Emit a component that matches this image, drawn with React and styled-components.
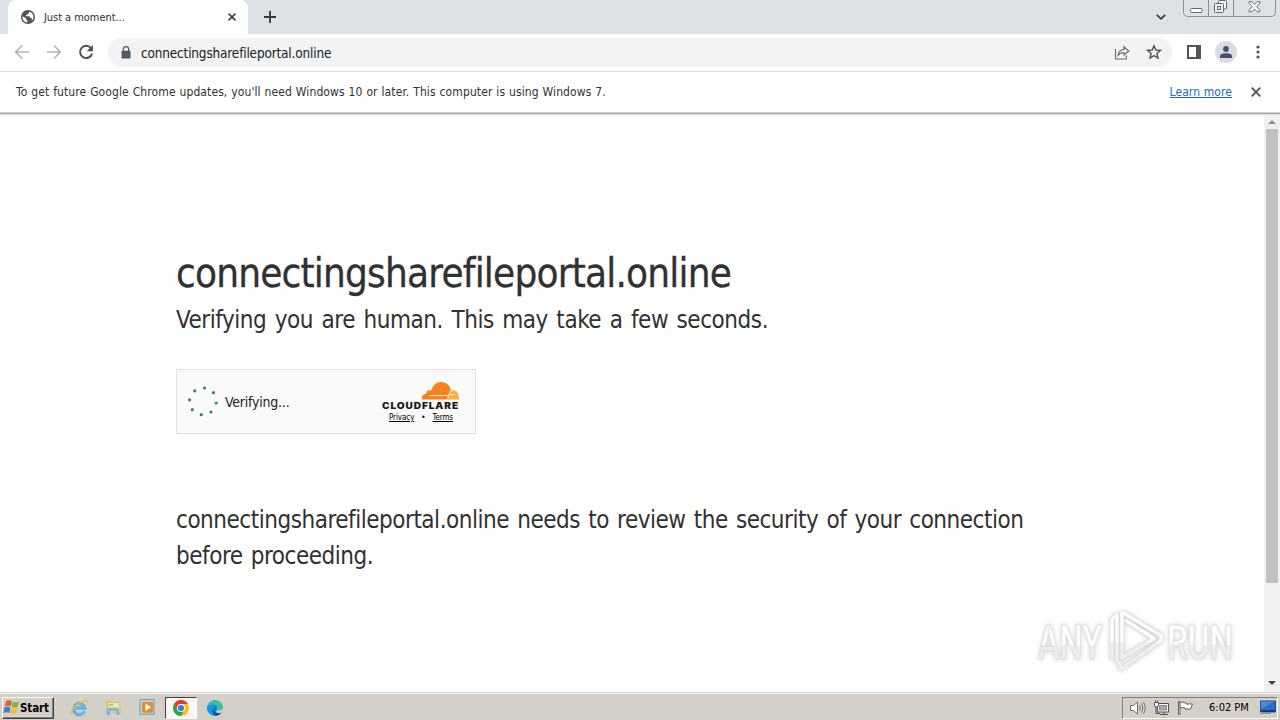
import styled, { createGlobalStyle } from "styled-components";

export default function App() {
    return (
        <Screen>
            <GlobalStyle />
            <TabStrip>
                <Tab>
                    <GlobeIcon />
                    <TabTitle>Just a moment...</TabTitle>
                    <CrossIcon size={8} stroke="#3c4043" />
                </Tab>
                <NewTab>
                    <svg width="12" height="12" viewBox="0 0 12 12">
                        <path d="M6 0v12M0 6h12" stroke="#35363a" strokeWidth="1.8" />
                    </svg>
                </NewTab>
                <TabSearch>
                    <svg width="10" height="6" viewBox="0 0 10 6">
                        <path d="M.8.8 5 4.8 9.2.8" fill="none" stroke="#35363a" strokeWidth="1.7" />
                    </svg>
                </TabSearch>
                <WindowButtons />
            </TabStrip>

            <Toolbar>
                <NavIcons>
                    <svg width="16" height="16" viewBox="0 0 16 16">
                        <path d="M15 8H2M8 1.5 1.7 8 8 14.5" fill="none" stroke="#b4b6b9" strokeWidth="1.7" />
                    </svg>
                    <svg width="16" height="16" viewBox="0 0 16 16">
                        <path d="M1 8h13M8 1.5 14.3 8 8 14.5" fill="none" stroke="#b4b6b9" strokeWidth="1.7" />
                    </svg>
                    <svg width="16" height="16" viewBox="0 0 16 16">
                        <path d="M13 4.2A6.1 6.1 0 1 0 14.1 9.5" fill="none" stroke="#505357" strokeWidth="2" />
                        <path d="M15 1v6.3H8.7z" fill="#505357" />
                    </svg>
                </NavIcons>
                <AddressBar>
                    <svg width="10" height="13" viewBox="0 0 10 13">
                        <path d="M2.3 6V3.4a2.7 2.7 0 0 1 5.4 0V6" fill="none" stroke="#55585c" strokeWidth="1.3" />
                        <rect x=".5" y="4.8" width="9" height="7.8" rx="1" fill="#55585c" />
                    </svg>
                    <Url>connectingsharefileportal.online</Url>
                    <ShareIcon />
                    <StarIcon />
                </AddressBar>
                <ToolbarActions>
                    <svg width="14" height="14" viewBox="0 0 14 14">
                        <path d="M1 1h12v12H1z" fill="none" stroke="#505357" strokeWidth="2" />
                        <path d="M9 1h4v12H9z" fill="#505357" />
                    </svg>
                    <Avatar>
                        <svg width="12" height="12" viewBox="0 0 12 12" fill="#46506a">
                            <circle cx="6" cy="3" r="2.9" />
                            <path d="M0 12V10.300Q0 7.200 6 7.200T12 10.300V12z" />
                        </svg>
                    </Avatar>
                    <svg width="4" height="14" viewBox="0 0 4 14" fill="#505357">
                        <circle cx="2" cy="2" r="1.6" />
                        <circle cx="2" cy="7" r="1.6" />
                        <circle cx="2" cy="12" r="1.6" />
                    </svg>
                </ToolbarActions>
            </Toolbar>

            <InfoBar>
                <InfoText>
                    To get future Google Chrome updates, you'll need Windows 10 or later. This computer is using Windows 7.
                </InfoText>
                <LearnMore>Learn more</LearnMore>
                <CrossIcon size={10} stroke="#505357" />
            </InfoBar>

            <Viewport>
                <Page>
                    <Title>connectingsharefileportal.online</Title>
                    <Subtitle>Verifying you are human. This may take a few seconds.</Subtitle>
                    <Challenge>
                        <Spinner />
                        <VerifyText>Verifying...</VerifyText>
                        <Brand>
                            <CloudflareLogo />
                            <BrandLinks>
                                <u>Privacy</u>
                                <span>•</span>
                                <u>Terms</u>
                            </BrandLinks>
                        </Brand>
                    </Challenge>
                    <Review>
                        <span>connectingsharefileportal.online needs to review the security of your connection</span>
                        <span>before proceeding.</span>
                    </Review>
                </Page>
                <Scrollbar>
                    <svg width="8" height="4" viewBox="0 0 8 4"><path d="M0 4 4 0l4 4z" fill="#8b8b8b" /></svg>
                    <Thumb />
                    <svg width="8" height="4" viewBox="0 0 8 4"><path d="M0 0h8L4 4z" fill="#404040" /></svg>
                </Scrollbar>
                <Watermark />
            </Viewport>

            <Taskbar>
                <StartButton>
                    <WindowsFlag />
                    <span>Start</span>
                </StartButton>
                <Launcher><ExplorerE /></Launcher>
                <Launcher><FolderIcon /></Launcher>
                <Launcher><MediaIcon /></Launcher>
                <Launcher $active><ChromeIcon /></Launcher>
                <Launcher><EdgeIcon /></Launcher>
                <Tray>
                    <SpeakerIcon />
                    <NetworkIcon />
                    <FlagIcon />
                    <Clock>6:02 PM</Clock>
                    <DesktopIcon />
                </Tray>
            </Taskbar>
        </Screen>
    );
}

function CrossIcon({ size, stroke }) {
    return (
        <svg width={size} height={size} viewBox="0 0 10 10">
            <path d="M.7.700 9.300 9.300M9.300.700.700 9.300" stroke={stroke} strokeWidth={size > 8 ? 1.8 : 2} />
        </svg>
    );
}

function GlobeIcon() {
    return (
        <svg width="14" height="14" viewBox="0 0 14 14">
            <circle cx="7" cy="7" r="7" fill="#505357" />
            <path d="M1.600 6.200 5 8.300v1.300l1.300.7v2.200C3.500 12.200 1.200 9.600 1.600 6.200z" fill="#fff" />
            <path d="M8.300 1.700c.4 1.300-.5 1.700-1.600 1.900L6.300 5H4.800l.2 1.300h3.400l1 1.700h1.400v2.700c2-1.800 2.300-5.200.3-7.500-.7-.8-1.600-1.300-2.800-1.500z" fill="#fff" />
        </svg>
    );
}

function WindowButtons() {
    return (
        <Controls>
            <ControlButton $width={24}>
                <svg width="13" height="6" viewBox="0 0 13 6">
                    <rect x=".5" y=".5" width="11.500" height="4" rx="1" fill="#fff" stroke="#62666e" />
                </svg>
            </ControlButton>
            <ControlButton $width={25}>
                <svg width="14" height="14" viewBox="0 0 14 14" fill="#f4f5f7" stroke="#5f636b">
                    <rect x="4.500" y=".5" width="8" height="8.500" rx="1" />
                    <rect x=".5" y="3.500" width="9" height="9" rx="1" />
                    <rect x="3.500" y="6.500" width="3" height="3" />
                </svg>
            </ControlButton>
            <ControlButton $width={42}>
                <svg width="13" height="13" viewBox="0 0 13 13">
                    <path d="M1 .7h3l2.500 2.800L9 .7h3v1.500L8.700 5.700 12 9.200v1.500H9L6.500 8 4 10.700H1V9.200l3.300-3.500L1 2.200z" fill="#f4f5f7" stroke="#62666e" strokeWidth=".9" />
                </svg>
            </ControlButton>
        </Controls>
    );
}

function ShareIcon() {
    return (
        <svg width="16" height="15" viewBox="0 0 16 15" fill="none" stroke="#65686c" strokeWidth="1.1">
            <path d="M1.500 4v10h10.800v-3.500" />
            <path d="M4 10.500c.4-4 2.500-5.800 6-6V1.800L14.800 6 10 10V7.500c-2.700 0-4.300.8-6 3z" />
        </svg>
    );
}

function StarIcon() {
    return (
        <svg width="16" height="16" viewBox="0 0 16 16">
            <path d="m8 1.700 1.800 4.300 4.700.4-3.600 3.100 1.100 4.600L8 11.600l-4 2.500 1.100-4.600-3.600-3.100 4.700-.4z" fill="none" stroke="#505357" strokeWidth="1.4" />
        </svg>
    );
}

const dots = [[16.5, 2], [25.4, 6.7], [28.2, 17], [23, 26], [13.3, 28.7], [4.3, 23.7], [1.6, 13.8], [6.7, 4.9]];

function Spinner() {
    return (
        <svg width="30" height="31" viewBox="0 0 30 31" fill="#2d8a5c">
            {dots.map(([x, y]) => <circle key={x} cx={x} cy={y} r="1.6" />)}
        </svg>
    );
}

function CloudflareLogo() {
    return (
        <svg width="78" height="29" viewBox="0 0 78 29">
            <path d="M40 18.500c-.6-3.400 1.200-5.600 4.300-5.800-.2-2.600 2.300-4.400 4.800-3C51 4.400 54.300 1 59 1c5.300 0 9 3.500 10 8.500l-2 9z" fill="#f6821f" />
            <path d="M65.500 18.500c.7-2 .5-3.400-1.200-3.700L47 14.500h19c2.500-.5 3-3.500 4-5.300 4.600-.5 7.500 3.500 7 9.300z" fill="#fbad41" />
            <path d="M47 14.600h17c2.700 0 3.500-1.500 4.300-4.500" fill="none" stroke="#fafafa" strokeWidth=".8" />
            <path d="M65.300 18.700c1.600-3.700.6-4.800 3.200-4.900l4-.3" fill="none" stroke="#fafafa" strokeWidth=".9" />
            <LogoText x="0" y="27.500" textLength="77" lengthAdjust="spacingAndGlyphs">CLOUDFLARE</LogoText>
        </svg>
    );
}

const outerMark = "M88 6 127 29.500v5L88 62.500l-4-3";
const innerMark = "M88 6v46l32-19.500L91 14M78 54V13l5-4v46l5 4";

function Watermark() {
    return (
        <WatermarkBox>
            <svg width="204" height="72" viewBox="0 0 204 72">
                <defs>
                    <linearGradient id="letters" x1="0" y1="20" x2="0" y2="54" gradientUnits="userSpaceOnUse">
                        <stop offset=".55" stopColor="#fff" />
                        <stop offset=".55" stopColor="#eee" />
                    </linearGradient>
                    <linearGradient id="mark" x1="0" y1="0" x2="0" y2="70" gradientUnits="userSpaceOnUse">
                        <stop offset=".52" stopColor="#fff" />
                        <stop offset=".52" stopColor="#efefef" />
                    </linearGradient>
                </defs>
                <MarkText x="4" y="53" textLength="64" lengthAdjust="spacingAndGlyphs">ANY</MarkText>
                <MarkText x="133" y="53" textLength="66" lengthAdjust="spacingAndGlyphs">RUN</MarkText>
                <g fill="none" strokeLinejoin="round">
                    <path d={outerMark + innerMark} stroke="#dfdfdf" strokeWidth="4.6" />
                    <path d={outerMark + innerMark} stroke="url(#mark)" strokeWidth="3.2" />
                </g>
            </svg>
        </WatermarkBox>
    );
}

function WindowsFlag() {
    return (
        <svg width="17" height="17" viewBox="0 0 17 17">
            <path d="M3 2q3-1.500 6 .2L7.800 7.500q-3-1.500-6 0z" fill="#e8622a" />
            <path d="M10 2.700q3 1.500 6-.2l-1.300 5.200q-3 1.600-6 .2z" fill="#7fb541" />
            <path d="M1.500 8.500q3-1.500 6 0L6.300 14q-3-1.700-6 0z" fill="#3b7fd0" />
            <path d="M8.500 9q3 1.400 6-.2l-1.400 5.400q-3 1.500-6 .1z" fill="#f5bd2d" />
        </svg>
    );
}

function ExplorerE() {
    return (
        <svg width="18" height="18" viewBox="0 0 18 18" fill="none">
            <path d="M14.500 12.200A5.600 5.600 0 1 1 14.800 9H4" stroke="#3a9bdc" strokeWidth="2.8" />
            <path d="M14.500 12.200A5.600 5.600 0 1 1 14.800 9H4" stroke="#84cdf3" strokeWidth="1.1" />
            <path d="M2.500 16C-.5 15 2.500 9 8 5.200S17.500.200 17 4" stroke="#edb63c" strokeWidth="1.4" />
        </svg>
    );
}

function FolderIcon() {
    return (
        <svg width="18" height="17" viewBox="0 0 18 17">
            <path d="M2 2h6l1 1.500h5V9H2z" fill="#e5c466" />
            <path d="M4 3.500h11l1.500 10H3z" fill="#f9e7a1" stroke="#d8b653" strokeWidth=".7" />
            <path d="M5 5h4v2H5z" fill="#9fce85" />
            <path d="M3 15.500V11q0-2 2-2h8q2 0 2 2v4.500h-2.500V12h-7v3.500z" fill="#86bfe3" stroke="#5b9bc5" strokeWidth=".5" />
        </svg>
    );
}

function MediaIcon() {
    return (
        <svg width="17" height="17" viewBox="0 0 17 17">
            <rect x="1" y=".7" width="14" height="14.500" fill="#b8dcf4" stroke="#5c9ac6" />
            <rect x="3" y="2.700" width="11" height="11" rx="2" fill="#ef8a1d" />
            <path d="m6.500 4.500 5.500 3.700-5.500 3.700z" fill="#fff" />
        </svg>
    );
}

function ChromeIcon() {
    return (
        <svg width="16" height="16" viewBox="0 0 16 16">
            <circle cx="8" cy="8" r="8" fill="#fbc116" />
            <path d="M1.100 4a8 8 0 0 1 13.800 0H8L4.600 10z" fill="#e33b2e" />
            <path d="M1.100 4a8 8 0 0 0 6.900 12l3.400-6H4.600z" fill="#2da44f" />
            <circle cx="8" cy="8" r="4" fill="#fff" />
            <circle cx="8" cy="8" r="3.100" fill="#3979e8" />
        </svg>
    );
}

function EdgeIcon() {
    return (
        <svg width="16" height="16" viewBox="0 0 16 16">
            <circle cx="8" cy="8" r="7.800" fill="#1877c8" />
            <path d="M.3 7.200C1 2.800 4.200.200 8 .200c4.400 0 7.800 3.100 7.800 6.800 0 3.600-4.700 4.500-6 2.700 1-3-1.200-4.900-4-4.900S.700 6 .3 7.200z" fill="#35c1a5" />
            <path d="M.3 7.200C2 4 8 3.700 8.500 7.300c-3 .7-3.500 4 .2 8.200C4 16.300-.400 12 .3 7.200z" fill="#1597e0" />
            <path d="M6.500 9c0 4.500 4.500 5.500 7.800 3.400-1.400 2.400-3.400 3.300-5.600 3.300C5.700 14.300 4.800 11 6.500 9z" fill="#124d96" />
            <path d="M9.800 9.700c1.300 1.800 6 .9 6-2.700v4l-1.500 1.500c-2.500 1.200-6.500.5-4.500-2.800z" fill="#d4d0c8" />
        </svg>
    );
}

function SpeakerIcon() {
    return (
        <svg width="17" height="16" viewBox="0 0 17 16" fill="none" stroke="#6b6965">
            <path d="M1.500 5.500h3L8.500 2v12l-4-3.500h-3z" fill="#fff" />
            <path d="M10.500 5.500q1.600 2.500 0 5M12.500 3.500q3 4.500 0 9M14.500 2q3.500 6 0 12" strokeWidth=".9" />
        </svg>
    );
}

function NetworkIcon() {
    return (
        <svg width="17" height="16" viewBox="0 0 17 16" stroke="#55534f">
            <rect x="4.500" y="3.500" width="11" height="8.500" fill="#fff" />
            <rect x="6.500" y="5.500" width="7" height="4.500" fill="#aaa7a0" stroke="#8b8983" />
            <path d="M7 14.500h8M11 12v2.500M3 7v6.500h4" fill="none" />
            <path d="M1.500 2.500h4V5L4.500 7h-2l-1-2zM2.500 2.500v-2M4.500 2.500v-2" fill="#fff" />
        </svg>
    );
}

function FlagIcon() {
    return (
        <svg width="18" height="16" viewBox="0 0 18 16" fill="#fff" stroke="#65635f">
            <path d="M1.500 1.500h1.500v13H1.500z" />
            <path d="M3 2.500q3-1 6 .5v1h6.500l-2 5H8V8Q5.500 7 3 8z" />
        </svg>
    );
}

function DesktopIcon() {
    return (
        <svg width="16" height="15" viewBox="0 0 16 15">
            <path d="M.5 1h15v11H.5z" fill="#2b6cc7" stroke="#214e8c" />
            <path d="M1 1.500h13L1 9z" fill="#4a8bdc" />
            <path d="M1 10h14v2H1z" fill="#183c6d" />
            <path d="M0 13.500h11" stroke="#90959b" />
        </svg>
    );
}

const GlobalStyle = createGlobalStyle`
    body {
        margin: 0;
        overflow: hidden;
    }

    * {
        box-sizing: border-box;
    }

    svg {
        display: block;
        flex-shrink: 0;
        overflow: visible;
    }
`
const Screen = styled.div`
    width: 1280px;
    height: 720px;
    display: flex;
    flex-direction: column;
    background: #fff;
    color: #313131;
    font-family: "DejaVu Sans Condensed", "DejaVu Sans", sans-serif;
    font-stretch: condensed;
    white-space: nowrap;
    overflow: hidden;
`
const TabStrip = styled.div`
    display: flex;
    height: 34px;
    padding-left: 8px;
    background: #dee1e6;
`
const Tab = styled.div`
    display: flex;
    align-items: center;
    width: 240px;
    padding: 0 12px 0 13px;
    background: #fff;
    border-radius: 8px 8px 0 0;
`
const TabTitle = styled.span`
    flex: 1;
    margin-left: 9px;
    font-size: 11px;
    letter-spacing: -0.05px;
`
const NewTab = styled.div`
    padding: 11px 16px;
`
const TabSearch = styled.div`
    margin-left: auto;
    padding: 14px 17px 0 0;
`
const Controls = styled.div`
    display: flex;
    height: 17px;
    margin-right: 4px;
    border: 1px solid #8e929a;
    border-top: none;
    border-radius: 0 0 5px 5px;
`
const ControlButton = styled.div`
    display: flex;
    align-items: flex-end;
    justify-content: center;
    width: ${(props) => props.$width}px;
    padding-bottom: 2px;

    & + & {
        border-left: 1px solid #8e929a;
    }
`
const Toolbar = styled.div`
    display: flex;
    align-items: center;
    height: 38px;
    border-bottom: 1px solid #dadce0;
`
const NavIcons = styled.div`
    display: flex;
    gap: 16px;
    width: 108px;
    padding-left: 14px;
`
const AddressBar = styled.div`
    display: flex;
    align-items: center;
    width: 1064px;
    height: 29px;
    padding: 0 10px 0 13px;
    gap: 16px;
    border-radius: 15px;
    background: #f1f3f4;
`
const Url = styled.span`
    flex: 1;
    margin-left: -6px;
    padding-top: 1px;
    font-size: 13.5px;
    letter-spacing: -0.18px;
    color: #202124;
`
const ToolbarActions = styled.div`
    display: flex;
    align-items: center;
    gap: 14px;
    padding-left: 15px;

    & > :last-child {
        margin-left: 5px;
    }
`
const Avatar = styled.div`
    display: flex;
    align-items: center;
    justify-content: center;
    width: 22px;
    height: 22px;
    border-radius: 50%;
    background: #d9dce1;
`
const InfoBar = styled.div`
    display: flex;
    align-items: center;
    height: 40px;
    padding: 0 19px 0 16px;
`
const InfoText = styled.span`
    flex: 1;
    font-size: 12px;
    letter-spacing: 0.1px;
    word-spacing: 0.35px;
`
const LearnMore = styled.span`
    margin-right: 19px;
    font-size: 12px;
    letter-spacing: 0.1px;
    color: #1a6bc4;
    text-decoration: underline;
`
const Viewport = styled.div`
    position: relative;
    display: flex;
    height: 581px;
    border-top: 1px solid #cfcfcf;
`
const Page = styled.div`
    flex: 1;
    padding: 130px 0 0 176px;
    background: linear-gradient(#ababab 1px, #dedede 1px 2px, #f0f0f0 2px 3px, #fff 4px);
`
const Title = styled.h1`
    margin: 0;
    font-size: 40px;
    font-weight: 400;
    line-height: 60px;
    letter-spacing: -0.8px;
    -webkit-text-stroke: 0.3px #313131;
`
const Subtitle = styled.h2`
    margin: 0;
    font-size: 24px;
    font-weight: 400;
    line-height: 34px;
    letter-spacing: -0.46px;
    word-spacing: 2.1px;
`
const Challenge = styled.div`
    display: flex;
    align-items: center;
    width: 300px;
    height: 65px;
    margin-top: 32px;
    padding: 1px 15px 0 11px;
    border: 1px solid #e0e0e0;
    background: #fafafa;
`
const VerifyText = styled.span`
    flex: 1;
    margin-left: 7px;
    font-size: 14px;
    letter-spacing: -0.22px;
    color: #222;
`
const Brand = styled.div`
    display: flex;
    flex-direction: column;
    align-items: center;
`
const LogoText = styled.text`
    font: 900 8.8px Inter, sans-serif;
    letter-spacing: 0.8px;
    fill: #1c1c1c;
`
const BrandLinks = styled.div`
    display: flex;
    gap: 7px;
    margin-top: 2px;
    font-size: 8px;
    line-height: 11px;
    letter-spacing: -0.1px;
    color: #000;
`
const Review = styled.div`
    display: flex;
    flex-direction: column;
    margin-top: 68px;
    font-size: 24px;
    line-height: 36px;
    letter-spacing: -0.48px;
    word-spacing: 1.8px;
`
const Scrollbar = styled.div`
    display: flex;
    flex-direction: column;
    align-items: center;
    width: 16px;
    padding: 7px 0 7px;
    background: linear-gradient(#ababab 1px, #dedede 1px 2px, #f1f1f1 2px);

    & > :last-child {
        margin-top: auto;
    }
`
const Thumb = styled.div`
    width: 12px;
    height: 454px;
    margin-top: 5px;
    background: #c1c1c1;
`
const WatermarkBox = styled.div`
    position: absolute;
    left: 1034px;
    top: 493px;
    filter: drop-shadow(0 0 2px #ccc);
`
const MarkText = styled.text`
    font: 500 49px Roboto, sans-serif;
    fill: url(#letters);
    stroke: #e2e2e2;
    stroke-width: 0.8px;
`
const Taskbar = styled.div`
    display: flex;
    align-items: center;
    height: 28px;
    padding: 2px 0 0 2px;
    border-top: 1px solid #d4d0c8;
    box-shadow: inset 0 1px #fff;
    background: #d4d0c8;
`
const StartButton = styled.div`
    display: flex;
    align-items: center;
    width: 52px;
    height: 22px;
    margin-right: 9px;
    border: 1px solid;
    border-color: #fff #404040 #404040 #fff;
    box-shadow: inset -1px -1px #808080;
    color: #000;

    span {
        font: bold 11.5px "DejaVu Sans Condensed", "DejaVu Sans", sans-serif;
        font-stretch: condensed;
        letter-spacing: -0.1px;
    }
`
const Launcher = styled.div`
    display: flex;
    align-items: center;
    justify-content: center;
    width: 32px;
    height: 22px;
    margin-right: 2px;
    border: 1px solid;
    border-color: ${(props) => (props.$active ? "#404040 #fff #fff #404040" : "transparent")};
    background: ${(props) => (props.$active ? "#f8f7f5" : "transparent")};
`
const Tray = styled.div`
    display: flex;
    align-items: center;
    width: 156px;
    height: 22px;
    margin: 0 2px 0 auto;
    padding: 0 1px 0 6px;
    gap: 7px;
    border: 1px solid;
    border-color: #808080 #fff #fff #808080;
`
const Clock = styled.span`
    flex: 1;
    margin-left: 7px;
    font-size: 11px;
    letter-spacing: 0;
    color: #000;
`
